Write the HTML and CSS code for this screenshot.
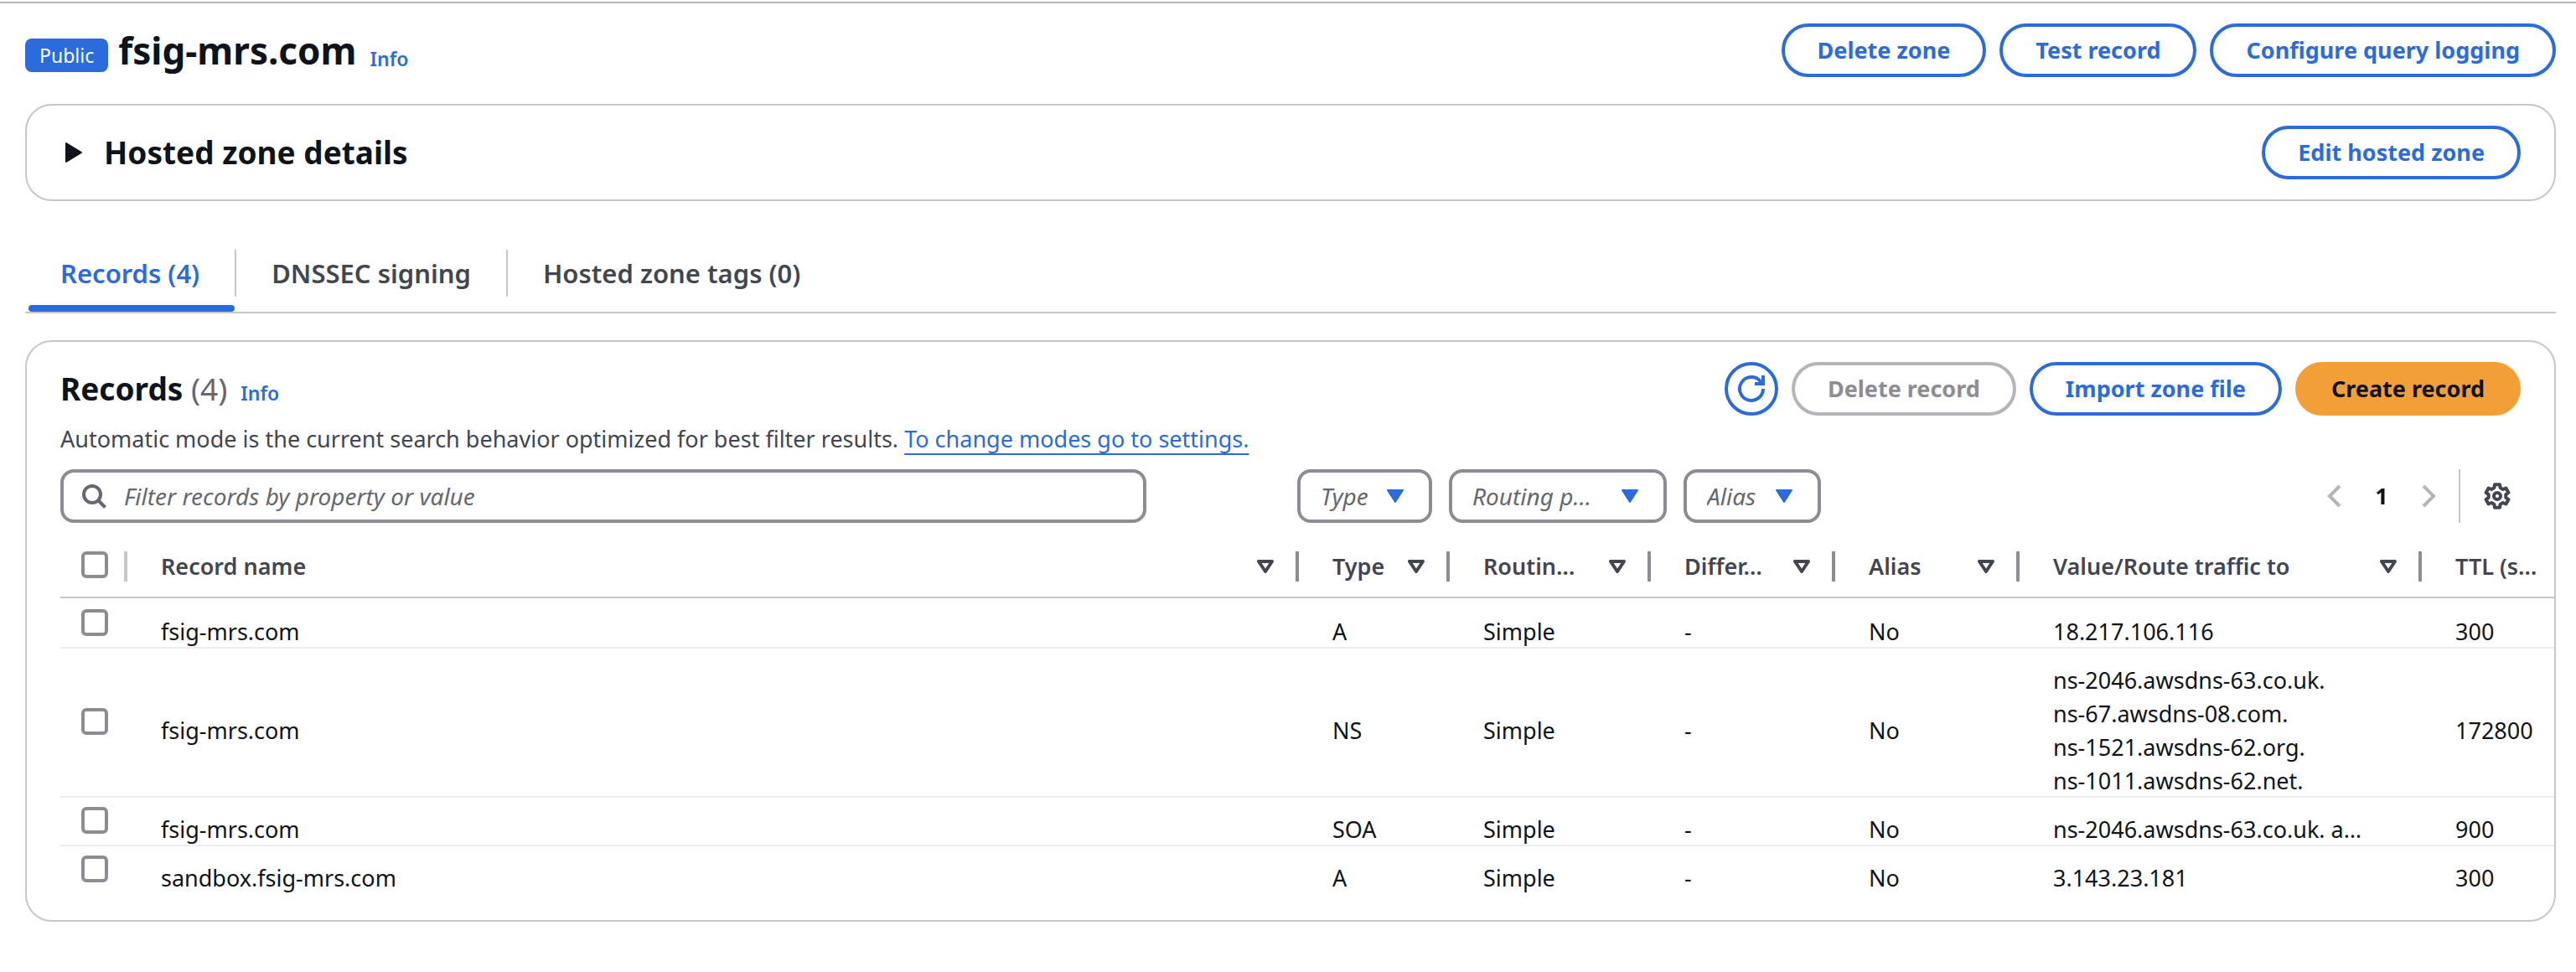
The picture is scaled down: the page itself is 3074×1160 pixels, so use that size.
FILE: index.html
```
<!DOCTYPE html>
<html lang="en">
<head>
<meta charset="utf-8">
<meta name="viewport" content="width=device-width, initial-scale=1">
<title>fsig-mrs.com – Hosted zone</title>
<link rel="stylesheet" href="styles.css">
</head>
<body>
<svg class="sprite" aria-hidden="true">
  <symbol id="sort" viewBox="0 0 20 16"><path d="M2 2h16L10 14z" fill="none" stroke="currentColor" stroke-width="4" stroke-linejoin="round"/></symbol>
  <symbol id="caret" viewBox="0 0 20 16"><path d="M1 1h18l-9 14z" fill="currentColor" stroke="currentColor" stroke-width="2" stroke-linejoin="round"/></symbol>
</svg>
<main class="page">
  <header class="zone-header">
    <div class="zone-title">
      <span class="badge">Public</span>
      <h1>fsig-mrs.com</h1>
      <a class="info" href="#info">Info</a>
    </div>
    <div class="actions">
      <button class="btn" type="button">Delete zone</button>
      <button class="btn" type="button">Test record</button>
      <button class="btn" type="button">Configure query logging</button>
    </div>
  </header>

  <section class="panel details">
    <h2>
      <button class="expander" type="button" aria-expanded="false">
        <svg class="icon" viewBox="0 0 32 32" aria-hidden="true"><path d="M7 5v22l18-11z" fill="currentColor" stroke="currentColor" stroke-width="2" stroke-linejoin="round"/></svg>
        Hosted zone details
      </button>
    </h2>
    <button class="btn" type="button">Edit hosted zone</button>
  </section>

  <div class="tabs" role="tablist">
    <button class="tab tab-active" type="button" role="tab" aria-selected="true"><span class="tab-label">Records (4)</span></button>
    <button class="tab" type="button" role="tab" aria-selected="false"><span class="tab-label">DNSSEC signing</span></button>
    <button class="tab" type="button" role="tab" aria-selected="false"><span class="tab-label">Hosted zone tags (0)</span></button>
  </div>

  <section class="panel records">
    <div class="records-header">
      <div class="records-title">
        <h2>Records <span class="count">(4)</span></h2>
        <a class="info" href="#records-info">Info</a>
      </div>
      <div class="actions">
        <button class="btn btn-icon" type="button" aria-label="Refresh">
          <svg class="icon" viewBox="0 0 32 32" aria-hidden="true"><path d="M30 16A14 14 0 1 1 26.5 6.7L29 9.5M30 0v10H20" fill="none" stroke="currentColor" stroke-width="4"/></svg>
        </button>
        <button class="btn" type="button" disabled>Delete record</button>
        <button class="btn" type="button">Import zone file</button>
        <button class="btn btn-primary" type="button">Create record</button>
      </div>
    </div>
    <p class="description">Automatic mode is the current search behavior optimized for best filter results. <a href="#settings">To change modes go to settings.</a></p>

    <div class="toolbar">
      <div class="search-slot">
        <label class="search">
          <svg class="icon" viewBox="0 0 32 32" aria-hidden="true"><g fill="none" stroke="currentColor" stroke-width="4"><circle cx="14" cy="14" r="10"/><path d="M20.5 20.5l9 9"/></g></svg>
          <input type="text" placeholder="Filter records by property or value" aria-label="Filter records">
        </label>
      </div>
      <label class="filter filter-type"><select aria-label="Type"><option>Type</option></select><svg class="small-icon" aria-hidden="true"><use href="#caret"/></svg></label>
      <label class="filter filter-routing"><select aria-label="Routing policy"><option>Routing p…</option></select><svg class="small-icon" aria-hidden="true"><use href="#caret"/></svg></label>
      <label class="filter filter-alias"><select aria-label="Alias"><option>Alias</option></select><svg class="small-icon" aria-hidden="true"><use href="#caret"/></svg></label>
      <nav class="pager" aria-label="Pages">
        <button class="plain" type="button" disabled aria-label="Previous page"><svg class="icon" viewBox="0 0 32 32" aria-hidden="true"><path d="M22 4L10 16l12 12" fill="none" stroke="currentColor" stroke-width="4"/></svg></button>
        <button class="plain page-number" type="button" aria-current="page">1</button>
        <button class="plain" type="button" disabled aria-label="Next page"><svg class="icon" viewBox="0 0 32 32" aria-hidden="true"><path d="M10 4l12 12-12 12" fill="none" stroke="currentColor" stroke-width="4"/></svg></button>
      </nav>
      <div class="preferences">
        <button class="plain" type="button" aria-label="Preferences"><svg class="icon" viewBox="0 0 32 32" aria-hidden="true"><g fill="none" stroke="currentColor" stroke-width="4" stroke-linejoin="round"><path d="M13 2.2h6l.6 3.9 3.1 1.9 3.7-1.4 3 5.2-3.1 2.4v3.6l3.1 2.4-3 5.2-3.7-1.4-3.1 1.9-.6 3.9h-6l-.6-3.9-3.1-1.9-3.7 1.4-3-5.2 3.1-2.4v-3.6l-3.1-2.4 3-5.2 3.7 1.4 3.1-1.9z"/><circle cx="16" cy="16" r="4"/></g></svg></button>
      </div>
    </div>

    <div class="table-wrap">
      <table>
        <colgroup><col class="c-select"><col><col class="c-type"><col class="c-routing"><col class="c-diff"><col class="c-alias"><col class="c-value"><col class="c-ttl"></colgroup>
        <thead>
          <tr>
            <th class="select"><div class="th-inner"><input type="checkbox" aria-label="Select all records"></div></th>
            <th><div class="th-inner">Record name <button class="plain" type="button" aria-label="Sort by record name"><svg class="small-icon"><use href="#sort"/></svg></button></div></th>
            <th><div class="th-inner">Type <button class="plain" type="button" aria-label="Sort by type"><svg class="small-icon"><use href="#sort"/></svg></button></div></th>
            <th><div class="th-inner">Routin… <button class="plain" type="button" aria-label="Sort by routing policy"><svg class="small-icon"><use href="#sort"/></svg></button></div></th>
            <th><div class="th-inner">Differ… <button class="plain" type="button" aria-label="Sort by differentiator"><svg class="small-icon"><use href="#sort"/></svg></button></div></th>
            <th><div class="th-inner">Alias <button class="plain" type="button" aria-label="Sort by alias"><svg class="small-icon"><use href="#sort"/></svg></button></div></th>
            <th><div class="th-inner">Value/Route traffic to <button class="plain" type="button" aria-label="Sort by value"><svg class="small-icon"><use href="#sort"/></svg></button></div></th>
            <th class="last"><div class="th-inner">TTL (s…</div></th>
          </tr>
        </thead>
        <tbody>
          <tr>
            <td class="select"><input type="checkbox" aria-label="Select fsig-mrs.com A"></td>
            <td>fsig-mrs.com</td><td>A</td><td>Simple</td><td>-</td><td>No</td><td>18.217.106.116</td><td>300</td>
          </tr>
          <tr>
            <td class="select"><input type="checkbox" aria-label="Select fsig-mrs.com NS"></td>
            <td>fsig-mrs.com</td><td>NS</td><td>Simple</td><td>-</td><td>No</td><td>ns-2046.awsdns-63.co.uk.<br>ns-67.awsdns-08.com.<br>ns-1521.awsdns-62.org.<br>ns-1011.awsdns-62.net.</td><td>172800</td>
          </tr>
          <tr>
            <td class="select"><input type="checkbox" aria-label="Select fsig-mrs.com SOA"></td>
            <td>fsig-mrs.com</td><td>SOA</td><td>Simple</td><td>-</td><td>No</td><td>ns-2046.awsdns-63.co.uk. a…</td><td>900</td>
          </tr>
          <tr>
            <td class="select"><input type="checkbox" aria-label="Select sandbox.fsig-mrs.com A"></td>
            <td>sandbox.fsig-mrs.com</td><td>A</td><td>Simple</td><td>-</td><td>No</td><td>3.143.23.181</td><td>300</td>
          </tr>
        </tbody>
      </table>
    </div>
  </section>
</main>
</body>
</html>
```
FILE: styles.css
```
:root {
  --blue: #2c6bdb;
  --text: #0f141a;
  --heading: #424650;
  --muted: #656871;
  --control: #8c8c94;
  --line: #c6c6cd;
  --disabled: #b4b4bb;
}

* { box-sizing: border-box; }

body {
  margin: 0;
  padding-top: 2px;
  background: #fff;
  color: var(--text);
  font: 27px/40px "Noto Sans", "Open Sans", sans-serif;
}

h1, h2, p { margin: 0; }
h1 { font-size: 44px; line-height: 52px; }
h2 { font-size: 37px; line-height: 44px; }

button, input, select { font: inherit; color: inherit; }
button { margin: 0; padding: 0; border: 0; background: none; white-space: nowrap; }

.sprite { display: none; }
.icon { display: block; width: 32px; height: 32px; flex: none; }
.small-icon { display: block; width: 20px; height: 16px; flex: none; overflow: visible; }
.plain { display: block; flex: none; }

.page {
  border-top: 2px solid var(--disabled);
  padding: 24px 24px 32px 30px;
}

/* Links and buttons */
.info {
  color: var(--blue);
  font-size: 23px;
  line-height: 32px;
  font-weight: 600;
  text-decoration: none;
}

.actions { display: flex; gap: 16px; }

.btn {
  height: 64px;
  padding: 0 39px;
  border: 4px solid var(--blue);
  border-radius: 32px;
  background: #fff;
  color: var(--blue);
  font-weight: 700;
}
.btn:disabled { border-color: var(--disabled); color: var(--control); }
.btn-icon { width: 64px; padding: 0 12px; }
.btn-primary { border-color: #f29f38; background: #f29f38; color: var(--text); }

/* Zone header */
.zone-header { display: flex; justify-content: space-between; align-items: center; }
.zone-title { display: flex; align-items: flex-end; }
.badge {
  margin-right: 12px;
  padding: 0 17px;
  border-radius: 8px;
  background: var(--blue);
  color: #fff;
  font-size: 23px;
}
.zone-title .info { margin-left: 16px; }

/* Panels */
.panel { margin-top: 32px; border: 2px solid var(--line); border-radius: 32px; }
.details { display: flex; justify-content: space-between; align-items: center; padding: 24px 40px; }
.expander { display: flex; align-items: center; gap: 20px; font-weight: 700; }

/* Tabs */
.tabs { display: flex; margin-top: 58px; border-bottom: 2px solid var(--line); }
.tab {
  display: flex;
  flex-direction: column;
  gap: 10px;
  color: var(--heading);
  font-size: 31px;
  font-weight: 600;
}
.tab-label { padding: 8px 42px; border-right: 2px solid var(--line); }
.tab:last-child .tab-label { border-right: 0; }
.tab::after { content: ""; align-self: stretch; height: 8px; margin: 0 2px 0 4px; border-radius: 4px; }
.tab-active { color: var(--blue); }
.tab-active::after { background: var(--blue); }

/* Records */
.records { padding: 24px 0 30px 40px; overflow: hidden; }
.records-header, .toolbar { display: flex; align-items: center; padding-right: 40px; }
.records-header { justify-content: space-between; }
.records-title { display: flex; align-items: baseline; gap: 16px; }
.count { color: var(--muted); font-weight: 400; }
.description { margin-top: 8px; color: var(--heading); }
.description a { color: var(--blue); text-decoration-thickness: 2px; text-underline-offset: 7px; text-decoration-skip-ink: none; }

.toolbar { gap: 20px; margin-top: 16px; }
.search-slot { flex: 0 1 1456px; }
.search {
  display: flex;
  align-items: center;
  gap: 20px;
  max-width: 1296px;
  height: 64px;
  padding: 0 20px;
  border: 4px solid var(--control);
  border-radius: 16px;
  color: var(--muted);
}
.search input { flex: 1; min-width: 0; padding: 0; border: 0; outline: 0; background: none; font-size: 28px; }
.search input::placeholder { color: var(--muted); font-style: italic; opacity: 1; }

.filter { position: relative; flex: none; }
.filter select {
  appearance: none;
  display: block;
  width: 100%;
  height: 64px;
  padding: 0 56px 0 24px;
  border: 4px solid var(--control);
  border-radius: 16px;
  background: #fff;
  color: var(--muted);
  font-size: 28px;
  font-style: italic;
}
.filter .small-icon { position: absolute; top: 24px; right: 34px; color: var(--blue); pointer-events: none; }
.filter-type { width: 161px; }
.filter-routing { width: 260px; }
.filter-alias { width: 164px; }

.pager { display: flex; align-items: center; gap: 18px; margin-left: auto; }
.pager .plain:disabled { color: var(--disabled); }
.pager .page-number { width: 44px; font-weight: 700; }
.preferences {
  display: flex;
  align-items: center;
  height: 64px;
  padding: 0 12px 0 28px;
  border-left: 2px solid var(--line);
  color: var(--heading);
}

/* Table */
.table-wrap { margin-top: 16px; overflow: hidden; }
table { width: 100%; table-layout: fixed; border-collapse: separate; border-spacing: 0; }
.c-select { width: 80px; }
.c-type { width: 180px; }
.c-routing { width: 240px; }
.c-diff, .c-alias { width: 220px; }
.c-value { width: 480px; }
.c-ttl { width: 158px; }

th {
  height: 74px;
  padding: 0;
  border-bottom: 2px solid var(--line);
  color: var(--heading);
  font-weight: 600;
  text-align: left;
  white-space: nowrap;
}
.th-inner {
  display: flex;
  align-items: center;
  justify-content: space-between;
  height: 36px;
  padding: 0 26px 0 40px;
  border-right: 4px solid var(--control);
}
th.select .th-inner { align-items: flex-start; padding: 0 0 0 25px; border-color: var(--line); }
th.last .th-inner { padding-right: 0; border-right: 0; }

td { padding: 18px 0 0 40px; box-shadow: inset 0 -2px #ebebf0; vertical-align: middle; white-space: nowrap; }
td.select { padding: 0 0 4px 25px; }
tbody tr:first-child td { padding-top: 20px; }
tbody tr:first-child td.select { padding: 0 0 2px 25px; }
tbody tr:last-child td { box-shadow: none; }

input[type="checkbox"] {
  appearance: none;
  display: block;
  width: 32px;
  height: 32px;
  margin: 0;
  border: 4px solid var(--control);
  border-radius: 6px;
  background: #fff;
}
```
